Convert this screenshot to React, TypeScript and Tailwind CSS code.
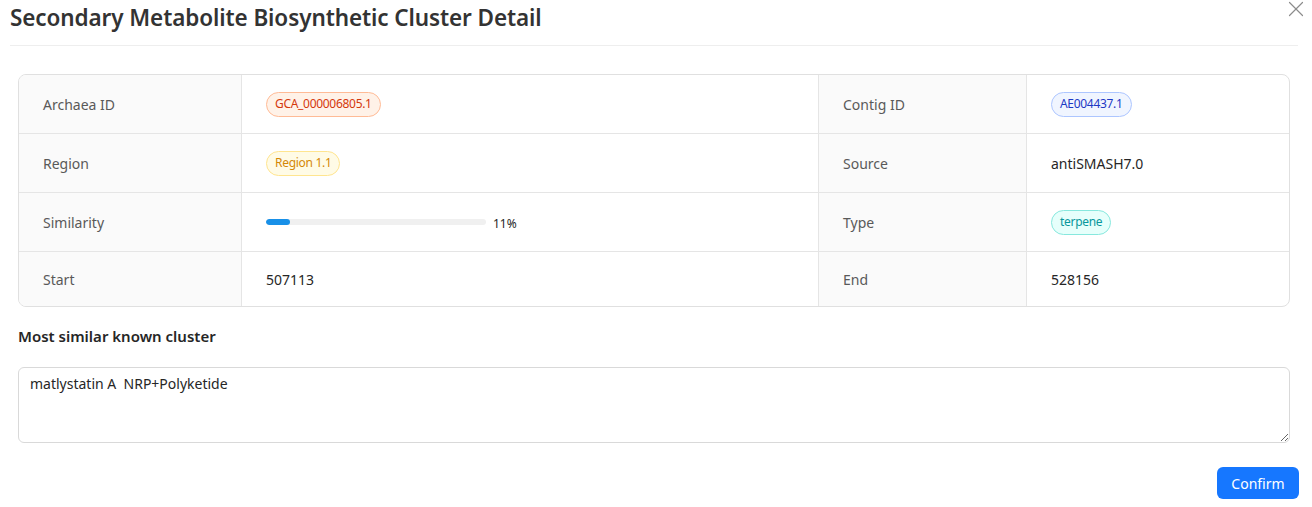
import { X } from 'lucide-react'

type Tone = 'volcano' | 'geekblue' | 'gold' | 'cyan'

const toneClass: Record<Tone, string> = {
  volcano: 'bg-[#fff2e8] border-[#ffbb96] text-[#d4380d]',
  geekblue: 'bg-[#f0f5ff] border-[#adc6ff] text-[#1d39c4]',
  gold: 'bg-[#fffbe6] border-[#ffe58f] text-[#d48806]',
  cyan: 'bg-[#e6fffb] border-[#87e8de] text-[#08979c]',
}

function Tag({ tone, children }: { tone: Tone; children: React.ReactNode }) {
  return (
    <span
      className={`inline-flex items-center h-[25px] px-[8px] rounded-full border text-[12px] tracking-[-0.3px] leading-none ${toneClass[tone]}`}
    >
      {children}
    </span>
  )
}

function Progress({ percent }: { percent: number }) {
  return (
    <div className="flex items-center gap-[7px]">
      <div className="w-[220px] h-[6px] rounded-full bg-[#f0f0f0] overflow-hidden">
        <div className="h-full rounded-full bg-[#1890e8]" style={{ width: `${percent}%` }} />
      </div>
      <span className="text-[12px] text-[#262626] pt-[3px]">{percent}%</span>
    </div>
  )
}

const labelCls = 'bg-[#fafafa] text-[#595959] px-[24px] flex items-center border-[#e5e5e5]'
const valueCls = 'text-[#262626] px-[24px] flex items-center border-[#e5e5e5]'

function Row({
  l1,
  v1,
  l2,
  v2,
  h,
  last,
}: {
  l1: string
  v1: React.ReactNode
  l2: string
  v2: React.ReactNode
  h: string
  last?: boolean
}) {
  const b = last ? '' : 'border-b'
  return (
    <div className={`grid grid-cols-[223px_577px_208px_1fr] ${h}`}>
      <div className={`${labelCls} ${b} border-r`}>{l1}</div>
      <div className={`${valueCls} ${b} border-r`}>{v1}</div>
      <div className={`${labelCls} ${b} border-r`}>{l2}</div>
      <div className={`${valueCls} ${b}`}>{v2}</div>
    </div>
  )
}

export default function App() {
  return (
    <div className="w-[1312px] h-[507px] bg-white relative font-['Noto_Sans',sans-serif] text-[14px]">
      <button className="absolute top-[-4px] right-[3px] text-[#8c8c8c]">
        <X className="w-[26px] h-[26px]" strokeWidth={1.1} />
      </button>

      <div className="pl-[10px] pr-[14px]">
        <h1 className="h-[46px] pt-[1px] text-[22.5px] font-semibold text-[#333] tracking-[-0.1px] border-b border-[#eeeeee]">
          Secondary Metabolite Biosynthetic Cluster Detail
        </h1>
      </div>

      <div className="px-[18px] pr-[22px] pt-[28px]">
        <div className="rounded-[8px] border border-[#e0e0e0] overflow-hidden">
          <Row
            h="h-[59px]"
            l1="Archaea ID"
            v1={<Tag tone="volcano">GCA_000006805.1</Tag>}
            l2="Contig ID"
            v2={<Tag tone="geekblue">AE004437.1</Tag>}
          />
          <Row
            h="h-[59px]"
            l1="Region"
            v1={<Tag tone="gold">Region 1.1</Tag>}
            l2="Source"
            v2="antiSMASH7.0"
          />
          <Row
            h="h-[59px]"
            l1="Similarity"
            v1={<Progress percent={11} />}
            l2="Type"
            v2={<Tag tone="cyan">terpene</Tag>}
          />
          <Row h="h-[54px]" l1="Start" v1="507113" l2="End" v2="528156" last />
        </div>

        <h2 className="mt-[17px] text-[15px] font-semibold text-[#262626] leading-[24px]">
          Most similar known cluster
        </h2>

        <textarea
          readOnly
          defaultValue="matlystatin A  NRP+Polyketide"
          className="mt-[19px] block w-full h-[76px] rounded-[6px] border border-[#d9d9d9] px-[11px] py-[5px] text-[14px] text-[#262626] outline-none resize-y"
        />
      </div>

      <div className="flex justify-end pr-[13px] pt-[24px]">
        <button className="h-[32px] w-[82px] rounded-[6px] bg-[#1677ff] text-white text-[14px]">
          Confirm
        </button>
      </div>
    </div>
  )
}
